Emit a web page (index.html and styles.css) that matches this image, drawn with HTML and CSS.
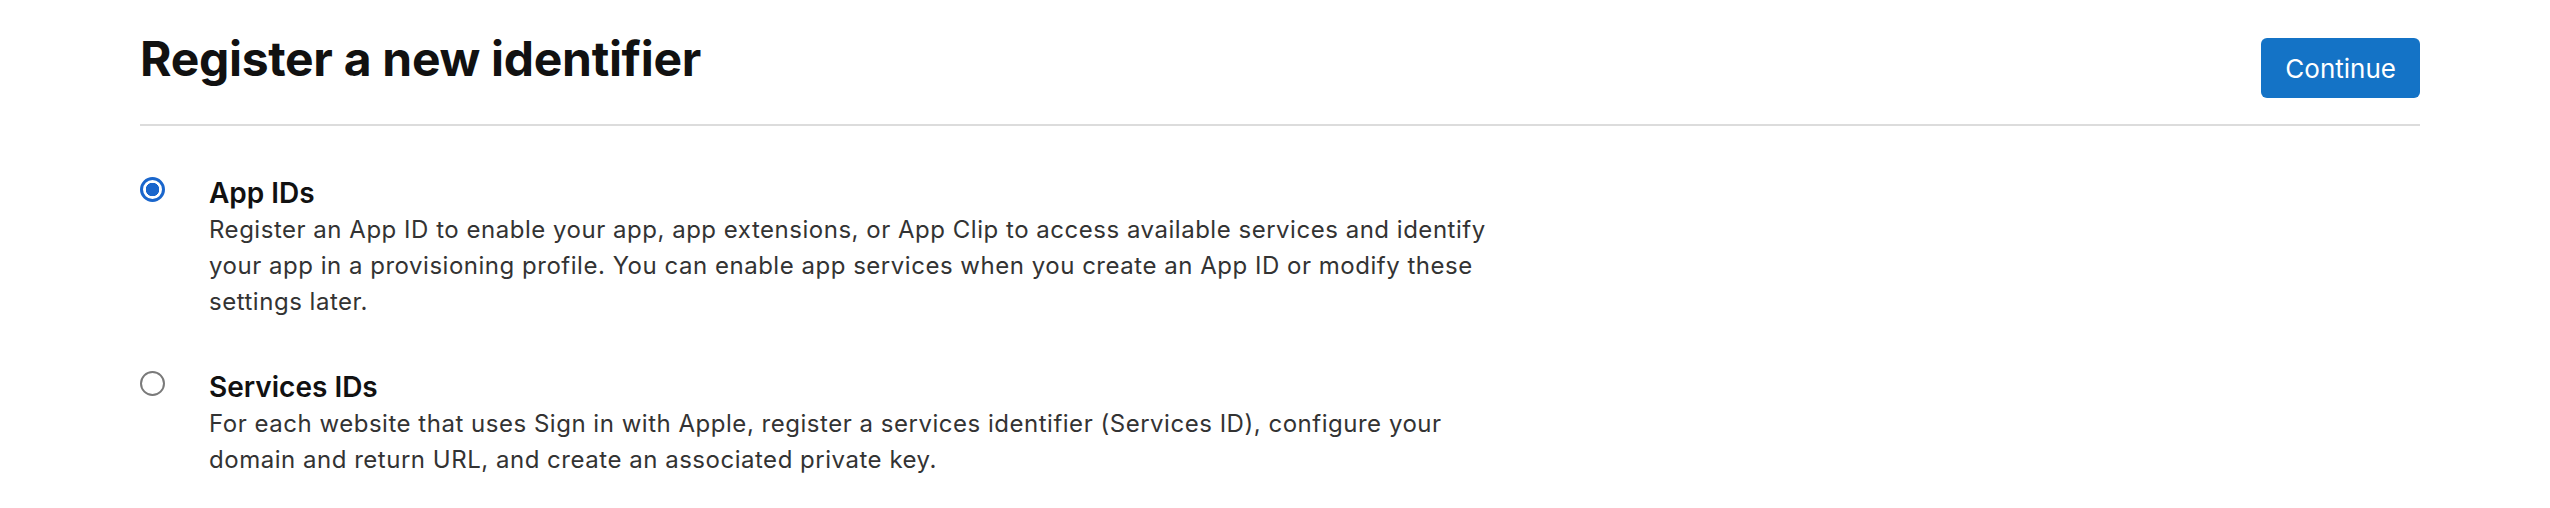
FILE: index.html
```html
<!DOCTYPE html>
<html lang="en">
<head>
<meta charset="UTF-8" />
<title>Register a new identifier</title>
<link rel="stylesheet" href="styles.css">
</head>
<body>

<div class="page">
  <header class="page-head">
    <h1>Register a new identifier</h1>
    <button class="btn-continue" type="button">Continue</button>
  </header>

  <!-- Tipos de identificador -->
  <ul class="options">
    <li class="option">
      <span class="radio checked"></span>
      <div class="option-body">
        <h2>App IDs</h2>
        <p>Register an App ID to enable your app, app extensions, or App Clip to access available services and identify your app in a provisioning profile. You can enable app services when you create an App ID or modify these settings later.</p>
      </div>
    </li>
    <li class="option">
      <span class="radio"></span>
      <div class="option-body">
        <h2>Services IDs</h2>
        <p>For each website that uses Sign in with Apple, register a services identifier (Services ID), configure your domain and return URL, and create an associated private key.</p>
      </div>
    </li>
  </ul>
</div>

</body>
</html>
```

FILE: styles.css
```css
* {
  margin: 0;
  padding: 0;
  box-sizing: border-box;
}
body {
  font-family: Inter, "Noto Sans", "Liberation Sans", sans-serif;
  background: #fff;
  color: #1d1d1f;
}

.page {
  padding: 0 130px 0 140px;
}

/* Cabecera */
.page-head {
  display: flex;
  justify-content: space-between;
  align-items: flex-start;
  padding: 30px 0 26px;
  border-bottom: 2px solid #dcdcdc;
}
.page-head h1 {
  font-size: 48px;
  line-height: 58px;
  font-weight: 700;
  color: #111;
  letter-spacing: -0.3px;
}
.btn-continue {
  margin-top: 8px;
  height: 60px;
  padding: 0 24px;
  background: #1473c6;
  color: #fff;
  border: none;
  border-radius: 6px;
  font-family: inherit;
  font-size: 26px;
  font-weight: 400;
  cursor: pointer;
}

/* Opciones */
.options {
  list-style: none;
  margin-top: 50px;
}
.option {
  display: flex;
  align-items: flex-start;
}
.option + .option {
  margin-top: 50px;
}
.radio {
  flex: none;
  width: 25px;
  height: 25px;
  margin: 1px 44px 0 0;
  border: 2px solid #7a7a7a;
  border-radius: 50%;
  background: #fff;
}
.radio.checked {
  border: 3px solid #1a66cc;
  background: radial-gradient(circle, #1a66cc 0 6.5px, #fff 7px);
}
.option-body {
  max-width: 1300px;
}
.option-body h2 {
  font-size: 28px;
  line-height: 34px;
  font-weight: 600;
  color: #111;
}
.option-body p {
  margin-top: 2px;
  font-size: 24px;
  line-height: 36px;
  letter-spacing: 0.52px;
  color: #333;
}
```
